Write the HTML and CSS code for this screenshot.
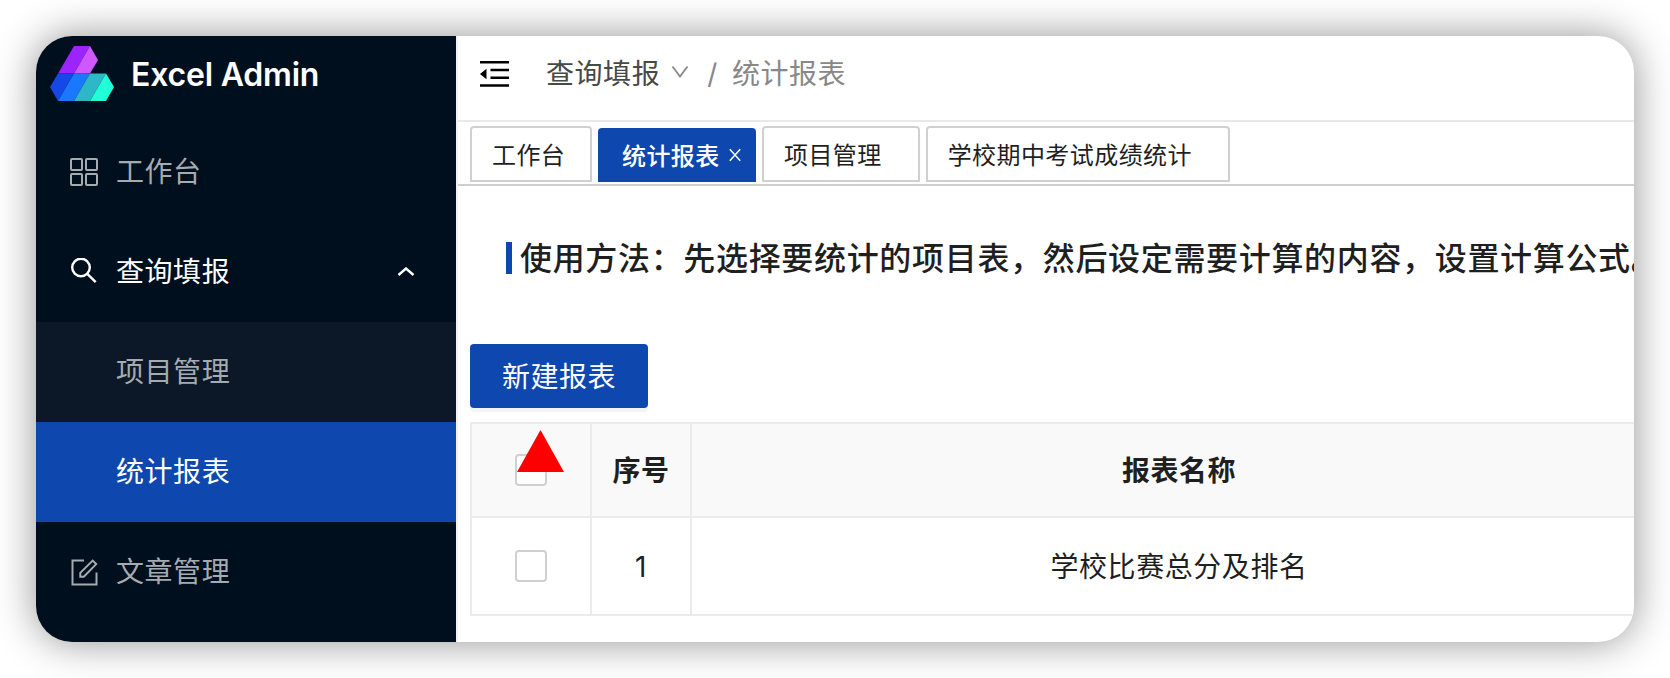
FILE: index.html
```html
<!DOCTYPE html>
<html lang="zh-CN">
<head>
    <meta charset="UTF-8">
    <meta name="viewport" content="width=device-width, initial-scale=1.0">
    <title>Excel Admin</title>
    <link rel="stylesheet" href="styles.css">
</head>
<body>
    <div class="window">
        <aside class="sidebar">
            <div class="brand">
                <svg class="logo" width="64" height="56" viewBox="0 0 64 56">
                    <path fill="#9b24ff" d="M24 0h16L24 27.500H8z"/>
                    <path fill="#cf59ff" d="M40 0l8 14-8 13.500H24z"/>
                    <path fill="#1648e8" d="M8 27.500h16L8 55 0 41z"/>
                    <path fill="#1a78ff" d="M24 27.500h16L24 55H8z"/>
                    <path fill="#2db8c8" d="M40 27.500h16L40 55H24z"/>
                    <path fill="#20ffd8" d="M56 27.500L64 41l-8 14H40z"/>
                </svg>
                <span class="brand-name">Excel Admin</span>
            </div>

            <nav class="menu">
                <a class="menu-item">
                    <svg class="menu-icon" width="28" height="28" viewBox="0 0 28 28">
                        <rect x="1" y="1" width="11" height="11" rx="1"/>
                        <rect x="16" y="1" width="11" height="11" rx="1"/>
                        <rect x="1" y="16" width="11" height="11" rx="1"/>
                        <rect x="16" y="16" width="11" height="11" rx="1"/>
                    </svg>
                    <span>工作台</span>
                </a>
                <a class="menu-item open">
                    <svg class="menu-icon" width="28" height="28" viewBox="0 0 28 28">
                        <circle cx="11" cy="9.500" r="8.800"/>
                        <path d="M17.300 15.800L25.700 24.200"/>
                    </svg>
                    <span>查询填报</span>
                    <svg class="menu-arrow" width="18" height="10" viewBox="0 0 18 10">
                        <path d="M1.500 8L9 1.500l7.500 6.500"/>
                    </svg>
                </a>
                <div class="submenu">
                    <a class="menu-item sub">项目管理</a>
                    <a class="menu-item sub active">统计报表</a>
                </div>
                <a class="menu-item">
                    <svg class="menu-icon" width="28" height="28" viewBox="0 0 28 28">
                        <path d="M14 2.500H2.500v24h24V14.500"/>
                        <path d="M10.300 18.700v-3.900L22.700 2.600l3.500 3.500-12.400 12.600z"/>
                    </svg>
                    <span>文章管理</span>
                </a>
            </nav>
        </aside>

        <main class="main">
            <header class="header">
                <svg class="fold" width="29" height="26" viewBox="0 0 29 26">
                    <path d="M0 0h29v2.500H0zM10.500 7.700H29v2.500H10.500zM10.500 15.500H29V18H10.500zM0 23.200h29v2.500H0zM0 13l6.500-5.200v10.400z"/>
                </svg>
                <div class="breadcrumb">
                    <span class="crumb-parent">查询填报</span>
                    <svg class="crumb-arrow" width="18" height="14" viewBox="0 0 18 14">
                        <path d="M1.500 1.500L9 11.500l7.500-10"/>
                    </svg>
                    <span class="crumb-slash">/</span>
                    <span>统计报表</span>
                </div>
            </header>

            <div class="tabs">
                <a class="tab tab-home">工作台</a>
                <a class="tab tab-active">
                    <span>统计报表</span>
                    <svg class="tab-close" width="12" height="14" viewBox="0 0 12 14">
                        <path d="M.8 1.200l10.400 11.600M11.200 1.200L.8 12.800"/>
                    </svg>
                </a>
                <a class="tab">项目管理</a>
                <a class="tab">学校期中考试成绩统计</a>
            </div>

            <section class="content">
                <h2 class="tip">使用方法：先选择要统计的项目表，然后设定需要计算的内容，设置计算公式。</h2>
                <button class="create">新建报表</button>

                <div class="table">
                    <div class="row head">
                        <div class="cell">
                            <span class="checkbox"></span>
                            <svg class="marker" width="47" height="42" viewBox="0 0 47 42">
                                <path fill="#ff0000" d="M23.500 0L47 42H0z"/>
                            </svg>
                        </div>
                        <div class="cell text">序号</div>
                        <div class="cell text">报表名称</div>
                    </div>
                    <div class="row">
                        <div class="cell"><span class="checkbox"></span></div>
                        <div class="cell text">1</div>
                        <div class="cell text">学校比赛总分及排名</div>
                    </div>
                </div>
            </section>
        </main>
    </div>
</body>
</html>
```

FILE: styles.css
```css
* {
    box-sizing: border-box;
}

body {
    margin: 0;
    padding: 36px;
    height: 678px;
    overflow: hidden;
    background-color: #fff;
    color: #1f1f1f;
    font-family: Inter, "Noto Sans CJK SC", sans-serif;
    font-size: 28px;
    letter-spacing: 0.02em;
    white-space: nowrap;
}

.window {
    display: flex;
    height: 606px;
    border-radius: 36px;
    overflow: hidden;
    background-color: #fff;
    box-shadow: 0 0 40px rgba(0, 0, 0, 0.43);
}

/* sidebar */

.sidebar {
    flex: 0 0 420px;
    background-color: #000f1d;
}

.brand {
    display: flex;
    align-items: flex-start;
    height: 86px;
    padding: 10px 14px;
}

.brand-name {
    margin-left: 17px;
    padding-top: 1px;
    color: #fff;
    font-size: 32px;
    font-weight: 600;
    line-height: 56px;
    letter-spacing: -0.2px;
}

.menu-item {
    display: flex;
    align-items: center;
    height: 100px;
    padding: 0 41px 0 34px;
    line-height: 40px;
    color: #a6abb0;
}

.menu-icon {
    margin-right: 18px;
    fill: none;
    stroke: currentColor;
    stroke-width: 2;
}

.menu-item.open {
    color: #fff;
}

.open .menu-icon {
    stroke-width: 2.4;
}

.menu-arrow {
    margin-left: auto;
    fill: none;
    stroke: currentColor;
    stroke-width: 2.4;
}

.submenu {
    background-color: #0c1827;
}

.menu-item.sub {
    padding-left: 80px;
}

.menu-item.active {
    background-color: #0e48af;
    color: #fff;
}

/* header */

.main {
    flex: 1;
    min-width: 0;
    border-left: 2px solid #f0f2f5;
}

.header {
    display: flex;
    align-items: flex-start;
    height: 86px;
    padding: 17px 22px;
    border-bottom: 2px solid #e8e8e8;
}

.fold {
    margin: 8px 37px 0 0;
}

.breadcrumb {
    display: flex;
    align-items: center;
    height: 42px;
    line-height: 40px;
    color: #888;
}

.crumb-parent {
    color: #484848;
}

.crumb-arrow {
    margin: 0 18px 5px 11px;
    fill: none;
    stroke: #888;
    stroke-width: 1.8;
}

.crumb-slash {
    margin-right: 14px;
}

/* tabs */

.tabs {
    display: flex;
    align-items: flex-end;
    gap: 6px;
    height: 64px;
    padding: 0 12px 2px;
    border-bottom: 2px solid #d0d0d0;
    font-size: 24px;
    letter-spacing: 0.42px;
}

.tab {
    display: flex;
    align-items: center;
    height: 56px;
    padding: 0 36px 2px 20px;
    border: 2px solid #d0d0d0;
    border-radius: 4px 4px 0 0;
}

.tab-home {
    width: 122px;
    padding-right: 0;
}

.tab-active {
    width: 158px;
    height: 54px;
    padding: 0 0 2px 24px;
    border: 0;
    background-color: #0e48af;
    color: #fff;
    font-weight: 500;
}

.tab-close {
    margin: 2px 0 0 9px;
    fill: none;
    stroke: #fff;
    stroke-width: 1.5;
}

/* content */

.content {
    padding: 56px 0 0 12px;
}

.tip {
    margin: 0 0 70px 36px;
    padding-left: 8px;
    border-left: 6px solid #0e48af;
    font-size: 32px;
    font-weight: 500;
    line-height: 34px;
    height: 32px;
    letter-spacing: 0.67px;
}

.create {
    display: block;
    width: 178px;
    height: 64px;
    margin-bottom: 14px;
    padding: 0 0 2px;
    border: 0;
    border-radius: 4px;
    background-color: #0e48af;
    box-shadow: 0 4px 0 rgba(0, 0, 0, 0.045);
    color: #fff;
    font: inherit;
    letter-spacing: inherit;
}

.table {
    width: 1200px;
    border-top: 2px solid #ebebeb;
    border-left: 2px solid #ebebeb;
}

.row {
    display: grid;
    grid-template-columns: 120px 100px 976px;
    height: 98px;
    line-height: 40px;
}

.row.head {
    height: 94px;
    background-color: #f9f9f9;
    font-weight: 600;
}

.cell {
    position: relative;
    display: flex;
    align-items: center;
    justify-content: center;
    border-right: 2px solid #ebebeb;
    border-bottom: 2px solid #ebebeb;
}

.cell.text {
    padding-top: 2px;
}

.checkbox {
    width: 32px;
    height: 32px;
    border: 2px solid #d0d0d0;
    border-radius: 4px;
    background-color: #fff;
}

/* red pointer lies over the header checkbox */
.marker {
    position: absolute;
    top: 6px;
    left: 45px;
}
```
